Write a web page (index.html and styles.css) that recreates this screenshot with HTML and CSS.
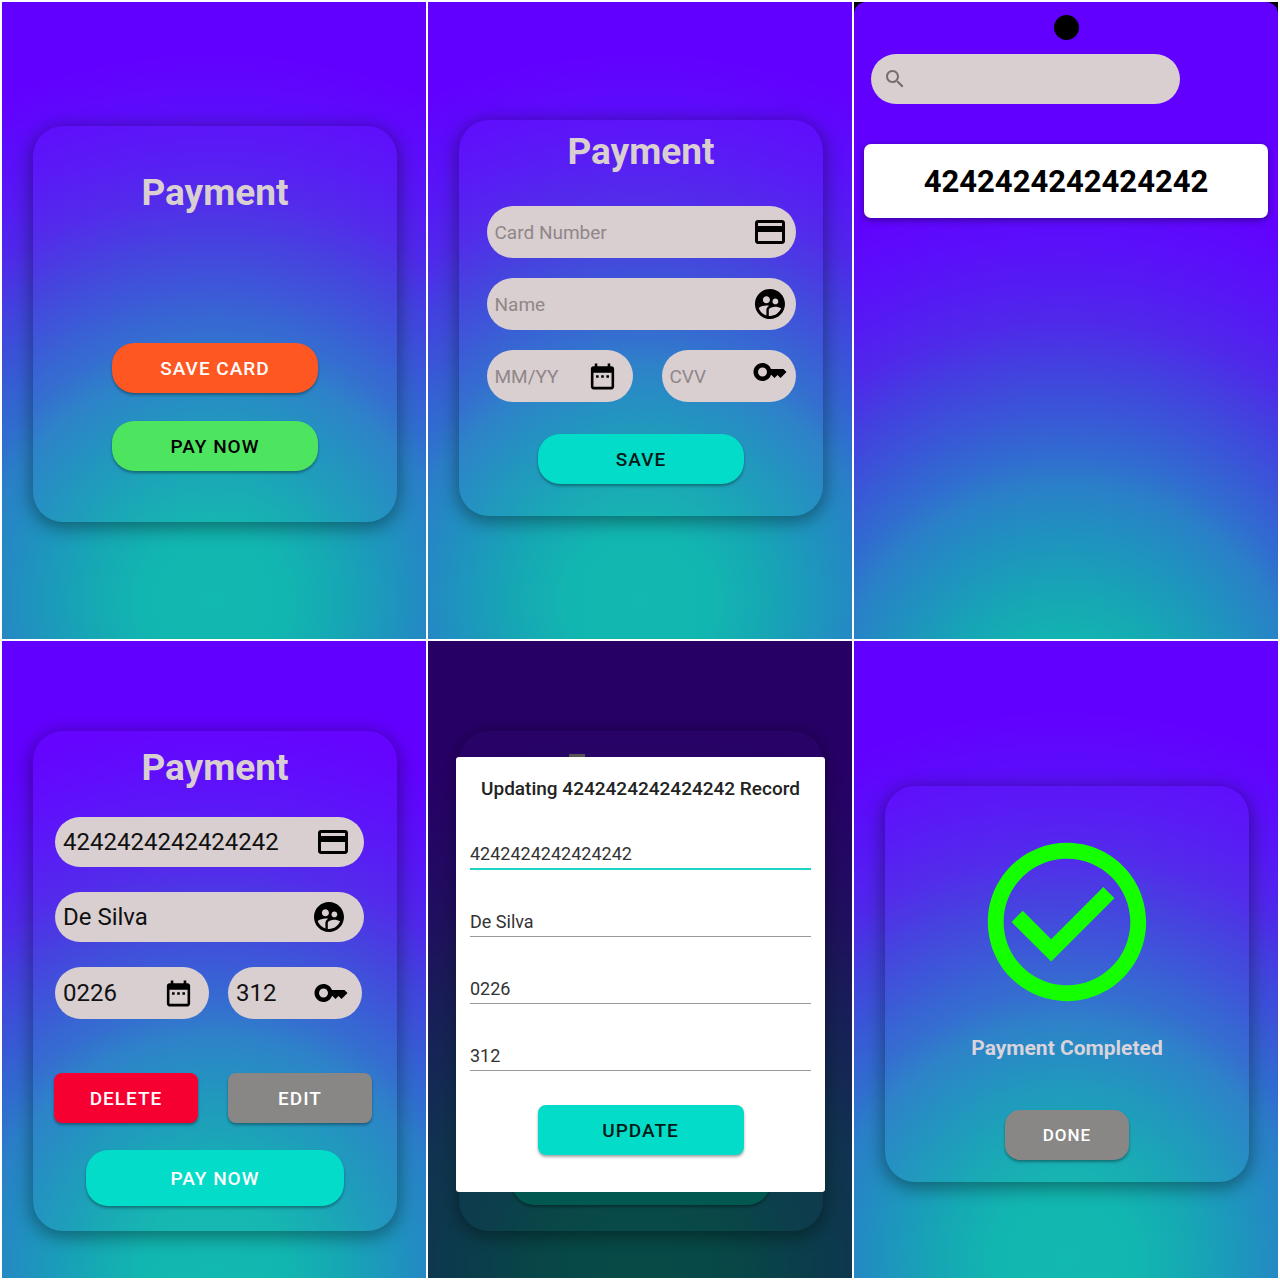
FILE: index.html
```html
<!DOCTYPE html>
<html lang="en">
<head>
<meta charset="utf-8">
<meta name="viewport" content="width=device-width, initial-scale=1">
<title>Payment</title>
<link rel="stylesheet" href="styles.css">
</head>
<body>
<svg class="sprite" aria-hidden="true">
  <symbol id="i-card" viewBox="0 0 24 24"><path d="M20 4H4c-1.11 0-1.99.89-1.99 2L2 18c0 1.11.89 2 2 2h16c1.11 0 2-.89 2-2V6c0-1.11-.89-2-2-2zm0 14H4v-6h16v6zm0-10H4V6h16v2z"/></symbol>
  <symbol id="i-user" viewBox="0 0 24 24"><path d="M11.99 2c-5.52 0-10 4.48-10 10s4.48 10 10 10 10-4.48 10-10-4.48-10-10-10zm3.61 6.34c1.07 0 1.93.86 1.93 1.93 0 1.07-.86 1.93-1.93 1.93-1.07 0-1.93-.86-1.93-1.93-.01-1.07.86-1.93 1.93-1.93zm-6-1.58c1.3 0 2.36 1.06 2.36 2.36 0 1.3-1.06 2.36-2.36 2.36s-2.36-1.06-2.36-2.36c0-1.31 1.05-2.36 2.36-2.36zm0 9.13v3.75c-2.4-.75-4.3-2.6-5.14-4.96 1.05-1.12 3.67-1.69 5.14-1.69.53 0 1.2.08 1.9.22-1.64.87-1.9 2.02-1.9 2.68zM11.99 20c-.27 0-.53-.01-.79-.04v-4.07c0-1.42 2.94-2.13 4.4-2.13 1.07 0 2.92.39 3.84 1.15-1.17 2.97-4.06 5.09-7.45 5.09z"/></symbol>
  <symbol id="i-date" viewBox="0 0 24 24"><path d="M9 11H7v2h2v-2zm4 0h-2v2h2v-2zm4 0h-2v2h2v-2zm2-7h-1V2h-2v2H8V2H6v2H5c-1.11 0-1.99.9-1.99 2L3 20c0 1.1.89 2 2 2h14c1.1 0 2-.9 2-2V6c0-1.1-.9-2-2-2zm0 16H5V9h14v11z"/></symbol>
  <symbol id="i-key" viewBox="0 0 24 24"><path d="M21 10h-8.35C11.83 7.67 9.61 6 7 6c-3.31 0-6 2.69-6 6s2.69 6 6 6c2.61 0 4.83-1.67 5.65-4H13l2 2 2-2 2 2 4-4.04L21 10zM7 15c-1.65 0-3-1.35-3-3s1.35-3 3-3 3 1.35 3 3-1.35 3-3 3z"/></symbol>
  <symbol id="i-search" viewBox="0 0 24 24"><path d="M15.5 14h-.79l-.28-.27C15.41 12.59 16 11.11 16 9.5 16 5.91 13.09 3 9.5 3S3 5.91 3 9.5 5.91 16 9.5 16c1.61 0 3.09-.59 4.23-1.57l.27.28v.79l5 4.99L20.49 19l-4.99-5zm-6 0C7.01 14 5 11.99 5 9.5S7.01 5 9.5 5 14 7.01 14 9.5 11.99 14 9.5 14z"/></symbol>
  <symbol id="i-check" viewBox="0 0 24 24"><path d="M12 2C6.48 2 2 6.48 2 12s4.48 10 10 10 10-4.48 10-10S17.52 2 12 2zm0 18c-4.42 0-8-3.58-8-8s3.58-8 8-8 8 3.58 8 8-3.58 8-8 8zm4.59-12.42L10 14.17l-3.59-3.58L5 12l5 5 8-8z"/></symbol>
</svg>

<main class="board">
  <section class="screen screen-home">
    <div class="card">
      <h1 class="title">Payment</h1>
      <div class="stack">
        <button class="btn btn-orange" type="button">SAVE CARD</button>
        <button class="btn btn-green" type="button">PAY NOW</button>
      </div>
    </div>
  </section>

  <section class="screen screen-save">
    <form class="card">
      <h1 class="title">Payment</h1>
      <div class="fields">
        <label class="field"><input type="text" placeholder="Card Number" aria-label="Card Number"><svg class="icon"><use href="#i-card"/></svg></label>
        <label class="field"><input type="text" placeholder="Name" aria-label="Name"><svg class="icon"><use href="#i-user"/></svg></label>
        <div class="row">
          <label class="field field-date"><input type="text" placeholder="MM/YY" aria-label="Expiry date"><svg class="icon icon-date"><use href="#i-date"/></svg></label>
          <label class="field field-cvv"><input type="text" placeholder="CVV" aria-label="CVV"><svg class="icon"><use href="#i-key"/></svg></label>
        </div>
      </div>
      <button class="btn btn-teal" type="button">SAVE</button>
    </form>
  </section>

  <section class="screen screen-list">
    <div class="phone">
      <span class="camera"></span>
      <label class="search"><svg><use href="#i-search"/></svg><input type="search" aria-label="Search cards"></label>
      <a class="record" href="#record">4242424242424242</a>
    </div>
  </section>

  <section class="screen screen-record" id="record">
    <form class="card">
      <h1 class="title">Payment</h1>
      <div class="fields">
        <label class="field"><input type="text" value="4242424242424242" aria-label="Card Number"><svg class="icon"><use href="#i-card"/></svg></label>
        <label class="field field-name"><input type="text" value="De Silva" aria-label="Name"><svg class="icon"><use href="#i-user"/></svg></label>
        <div class="row">
          <label class="field field-date"><input type="text" value="0226" aria-label="Expiry date"><svg class="icon icon-date"><use href="#i-date"/></svg></label>
          <label class="field field-cvv"><input type="text" value="312" aria-label="CVV"><svg class="icon"><use href="#i-key"/></svg></label>
        </div>
      </div>
      <div class="actions">
        <button class="btn btn-square btn-red" type="button">DELETE</button>
        <button class="btn btn-square btn-grey" type="button">EDIT</button>
      </div>
      <button class="btn btn-wide btn-teal" type="button">PAY NOW</button>
    </form>
  </section>

  <section class="screen screen-record screen-update">
    <div class="card" aria-hidden="true">
      <span class="title-edge"></span>
      <button class="btn btn-wide btn-teal" type="button" tabindex="-1"></button>
    </div>
    <div class="scrim">
      <form class="dialog">
        <h2>Updating 4242424242424242 Record</h2>
        <input class="line focused" type="text" value="4242424242424242" aria-label="Card Number">
        <input class="line" type="text" value="De Silva" aria-label="Name">
        <input class="line" type="text" value="0226" aria-label="Expiry date">
        <input class="line" type="text" value="312" aria-label="CVV">
        <button class="btn btn-square btn-teal" type="button">UPDATE</button>
      </form>
    </div>
  </section>

  <section class="screen screen-done">
    <div class="card">
      <svg class="check" role="img" aria-label="Completed"><use href="#i-check"/></svg>
      <p class="message">Payment Completed</p>
      <button class="btn btn-grey btn-done" type="button">DONE</button>
    </div>
  </section>
</main>
</body>
</html>
```
FILE: styles.css
```css
* {
  box-sizing: border-box;
}

body {
  margin: 0;
  background: #fff;
  font-family: Roboto, "Liberation Sans", sans-serif;
}

button,
input {
  font-family: inherit;
}

.sprite {
  display: none;
}

.board {
  display: grid;
  grid-template-columns: repeat(3, minmax(0, 1fr));
  grid-auto-rows: 1fr;
  gap: 2px;
  min-height: 100vh;
  padding: 2px;
}

.screen {
  --fade: #12b9b0 0%, #12b6b0 13%, #16a7b5 23%, #2090c0 35%, #2a80c8 43%,
    #306ecf 48%, #3a55d8 57%, #4340df 65%, #4f29ea 73%, #5618f5 82%,
    #5c0cfb 90%, #6200ff 100%;
  position: relative;
  padding: 0 29px 0 31px;
  background: radial-gradient(130% 86% at 50% 94%, var(--fade));
}

/* Frosted card */

.card {
  display: flex;
  flex-direction: column;
  align-items: center;
  min-height: 396px;
  border-radius: 30px;
  background: rgba(255, 255, 255, 0.02);
  box-shadow: 0 4px 18px 2px rgba(0, 0, 0, 0.38);
}

.title {
  margin: 0;
  color: #d9cfd0;
  font-size: 37px;
  font-weight: 700;
  line-height: 48px;
}

/* Buttons */

.btn {
  width: 206px;
  height: 50px;
  padding: 0;
  border: 0;
  border-radius: 22px;
  box-shadow: 0 2px 3px rgba(0, 0, 0, 0.35);
  color: #fff;
  font-size: 19px;
  font-weight: 500;
  letter-spacing: 1px;
}

.btn-orange {
  background: #ff5722;
}

.btn-green {
  background: #4de560;
  color: #000;
}

.btn-teal {
  background: #03dcc8;
  color: #001a17;
}

.btn-red {
  background: #f60031;
}

.btn-grey {
  background: #888786;
}

.btn-square {
  border-radius: 8px;
}

.btn-wide {
  width: 258px;
  height: 56px;
  color: #fff;
}

.btn-done {
  width: 124px;
  border-radius: 15px;
  font-size: 17px;
}

/* Rounded fields */

.fields {
  display: flex;
  flex-direction: column;
  width: 309px;
}

.row {
  display: flex;
  justify-content: space-between;
}

.field {
  display: flex;
  align-items: center;
  padding: 0 8px;
  border-radius: 26px;
  background: #d9cfd0;
}

.field input {
  flex: 1;
  min-width: 0;
  padding: 0;
  border: 0;
  outline: 0;
  background: none;
  color: #111;
}

.field input::placeholder {
  color: #8f8788;
  opacity: 1;
}

.icon {
  flex: none;
  width: 36px;
  height: 36px;
}

.icon-date {
  width: 31px;
  height: 31px;
}

.field-date {
  padding-right: 15px;
}

.field-cvv {
  width: 134px;
}

/* Home */

.screen-home {
  padding-top: 124px;
}

.screen-home .card {
  padding-top: 43px;
}

.stack {
  display: flex;
  flex-direction: column;
  gap: 28px;
  margin-top: 126px;
}

/* Save card */

.screen-save {
  padding-top: 118px;
}

.screen-save .card {
  padding-top: 8px;
}

.screen-save .fields {
  gap: 20px;
  margin: 30px 0 32px;
}

.screen-save .field {
  height: 52px;
}

.screen-save .field input {
  font-size: 19px;
}

.screen-save .field-date {
  width: 146px;
}

.screen-save .field-cvv .icon {
  margin-bottom: 8px;
}

/* Card list */

.screen-list {
  padding: 0;
  background: #000;
}

.phone {
  display: flex;
  flex-direction: column;
  height: 100%;
  padding: 13px 10px 0;
  border-radius: 12px 12px 0 0;
  background: radial-gradient(130% 86% at 50% 113%, var(--fade));
}

.camera {
  align-self: center;
  width: 25px;
  height: 25px;
  border-radius: 50%;
  background: #000;
}

.search {
  display: flex;
  align-items: center;
  width: 309px;
  height: 50px;
  margin: 14px 0 40px 7px;
  padding: 0 12px;
  border-radius: 25px;
  background: #d9cfd0;
}

.search svg {
  width: 24px;
  height: 24px;
  fill: #756d6e;
}

.search input {
  flex: 1;
  min-width: 0;
  border: 0;
  outline: 0;
  background: none;
  font-size: 19px;
}

.record {
  padding: 14px 0 12px;
  border-radius: 7px;
  background: #fff;
  box-shadow: 0 2px 7px rgba(0, 0, 0, 0.4);
  color: #000;
  font-size: 31px;
  font-weight: 700;
  line-height: 48px;
  text-align: center;
  text-decoration: none;
}

/* Saved record */

.screen-record {
  padding-top: 90px;
  background: radial-gradient(130% 86% at 50% 99%, var(--fade));
}

.screen-record .card {
  min-height: 500px;
  padding-top: 13px;
}

.screen-record .fields {
  align-self: flex-start;
  gap: 25px;
  margin: 25px 0 54px 22px;
}

.screen-record .field {
  height: 50px;
  padding-right: 13px;
}

.screen-record .field input {
  font-size: 24px;
}

.screen-record .field-name {
  padding-right: 17px;
}

.screen-record .field-date {
  width: 154px;
  padding-right: 15px;
}

.screen-record .row {
  justify-content: flex-start;
  gap: 19px;
}

.screen-record .row .field {
  height: 52px;
}

.actions {
  display: flex;
  align-self: flex-start;
  gap: 30px;
  margin: 0 0 27px 21px;
}

.actions .btn {
  width: 144px;
}

/* Update dialog */

.screen-update .card {
  justify-content: space-between;
  padding: 23px 0 26px;
}

/* Top of the heading that shows above the dialog */
.title-edge {
  align-self: flex-start;
  width: 16px;
  height: 4px;
  margin-left: 110px;
  background: #d9cfd0;
}

.scrim {
  position: absolute;
  inset: 0;
  padding: 116px 27px 0 28px;
  background: rgba(0, 0, 0, 0.6);
}

.dialog {
  display: flex;
  flex-direction: column;
  align-items: center;
  padding: 20px 14px 37px;
  border-radius: 3px;
  background: #fff;
}

.dialog h2 {
  margin: 0 0 40px;
  color: #222;
  font-size: 19px;
  font-weight: 500;
  line-height: 24px;
}

.line {
  width: 100%;
  height: 29px;
  margin-bottom: 38px;
  padding: 0 0 2px;
  border: 0;
  border-bottom: 1px solid #999;
  outline: 0;
  color: #333;
  font-size: 18px;
}

.line.focused {
  border-bottom: 2px solid #1fd3c4;
}

.dialog .btn-square {
  margin-top: -4px;
}

/* Completed */

.screen-done {
  padding-top: 145px;
  background: radial-gradient(130% 86% at 50% 97%, var(--fade));
}

.screen-done .card {
  padding-top: 41px;
}

.check {
  width: 190px;
  height: 190px;
  fill: #14ff00;
}

.message {
  margin: 15px 0 46px;
  color: #d9d3dc;
  font-size: 21px;
  font-weight: 700;
  line-height: 32px;
}
```
